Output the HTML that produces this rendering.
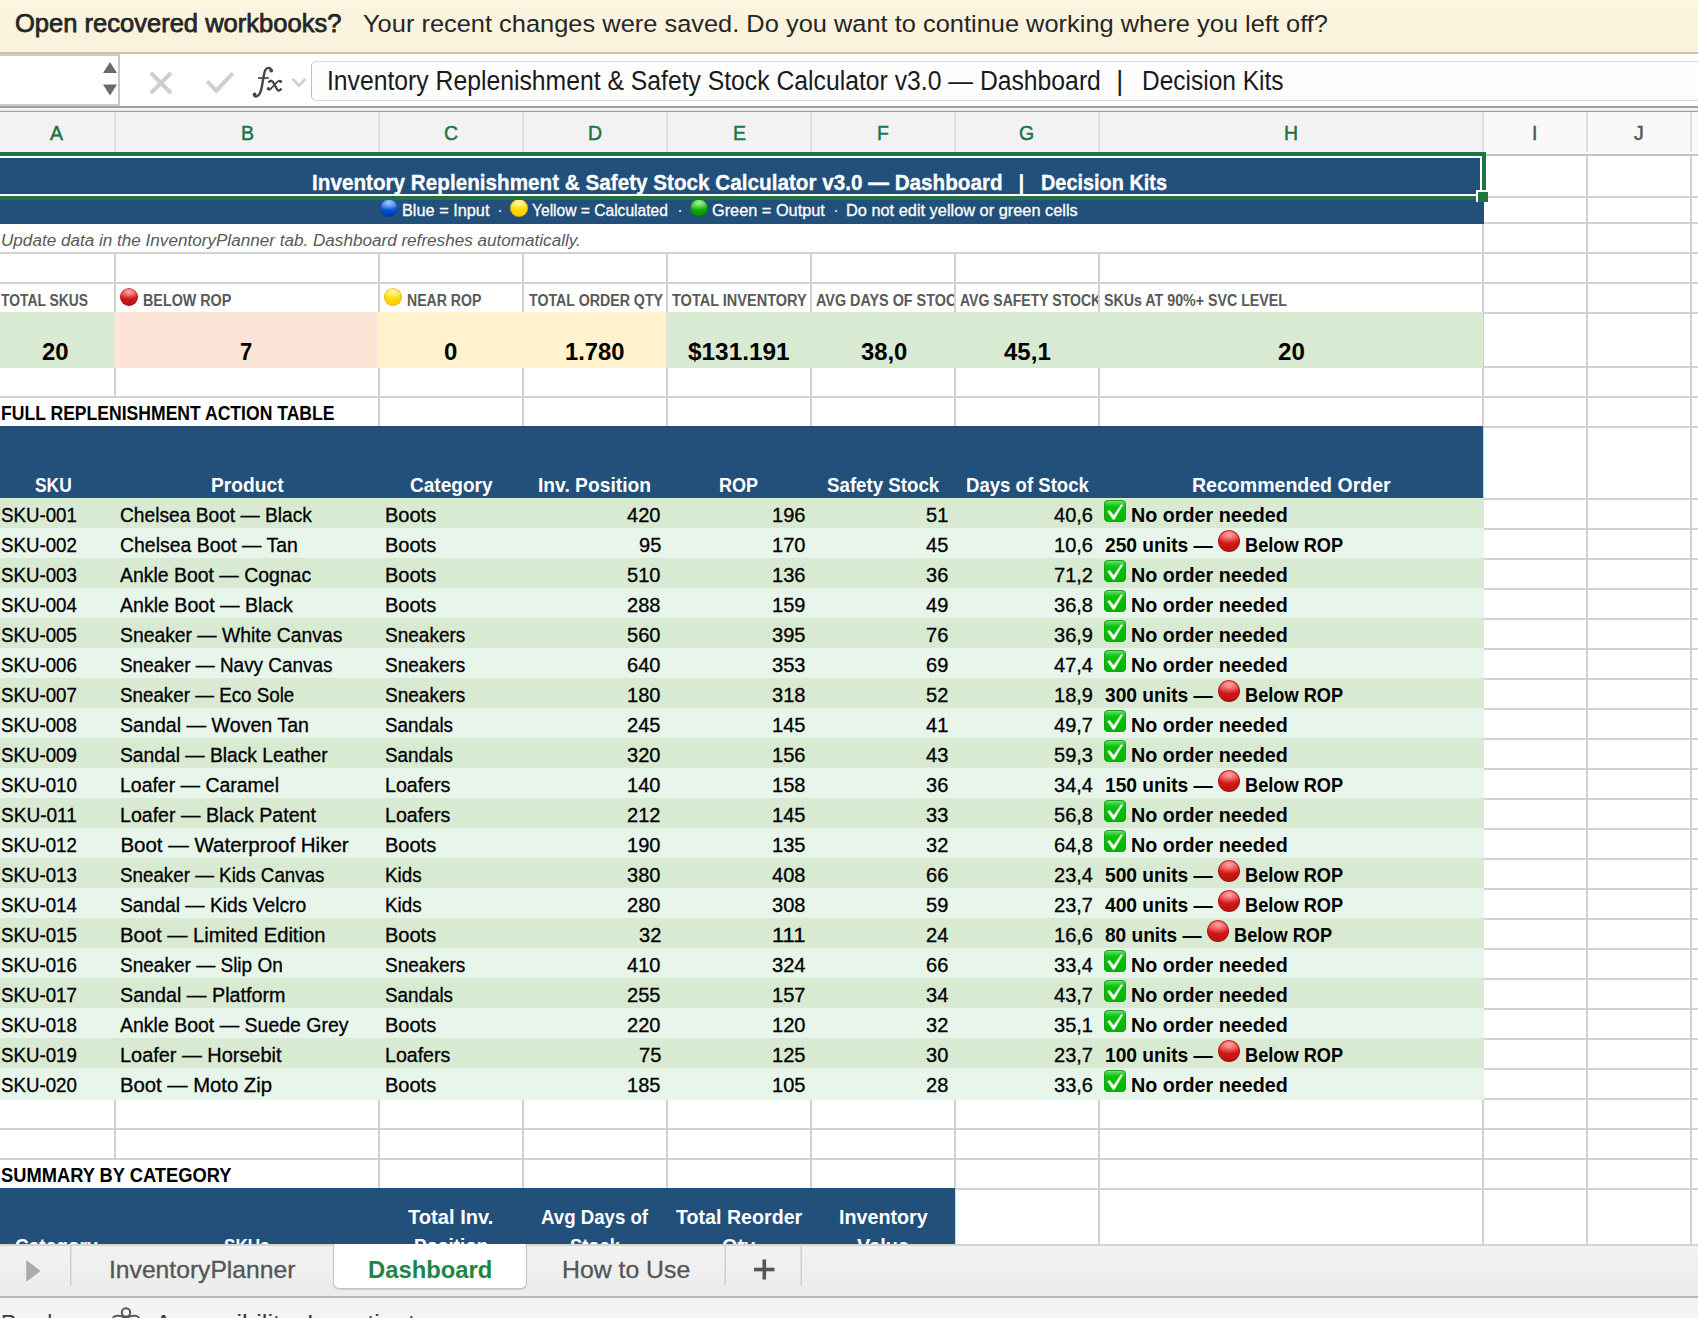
<!DOCTYPE html>
<html><head><meta charset="utf-8"><style>
html,body{margin:0;padding:0;width:1698px;height:1318px;overflow:hidden;background:#fff}
body{position:relative;font-family:"Liberation Sans",sans-serif}
body div{position:absolute;box-sizing:border-box}
.t{white-space:pre;transform-origin:0 0}
</style></head><body>
<div style="left:0px;top:112px;width:1698px;height:1132px;background:#fff;"></div>
<div style="left:0px;top:196px;width:1698px;height:2px;background:#D2D2D2;"></div>
<div style="left:0px;top:222px;width:1698px;height:2px;background:#D2D2D2;"></div>
<div style="left:0px;top:252px;width:1698px;height:2px;background:#D2D2D2;"></div>
<div style="left:0px;top:282px;width:1698px;height:2px;background:#D2D2D2;"></div>
<div style="left:0px;top:366px;width:1698px;height:2px;background:#D2D2D2;"></div>
<div style="left:0px;top:396px;width:1698px;height:2px;background:#D2D2D2;"></div>
<div style="left:0px;top:426px;width:1698px;height:2px;background:#D2D2D2;"></div>
<div style="left:0px;top:498px;width:1698px;height:2px;background:#D2D2D2;"></div>
<div style="left:0px;top:1098px;width:1698px;height:2px;background:#D2D2D2;"></div>
<div style="left:0px;top:1128px;width:1698px;height:2px;background:#D2D2D2;"></div>
<div style="left:0px;top:1158px;width:1698px;height:2px;background:#D2D2D2;"></div>
<div style="left:0px;top:1188px;width:1698px;height:2px;background:#D2D2D2;"></div>
<div style="left:1483px;top:528px;width:215px;height:2px;background:#D2D2D2;"></div>
<div style="left:1483px;top:558px;width:215px;height:2px;background:#D2D2D2;"></div>
<div style="left:1483px;top:588px;width:215px;height:2px;background:#D2D2D2;"></div>
<div style="left:1483px;top:618px;width:215px;height:2px;background:#D2D2D2;"></div>
<div style="left:1483px;top:648px;width:215px;height:2px;background:#D2D2D2;"></div>
<div style="left:1483px;top:678px;width:215px;height:2px;background:#D2D2D2;"></div>
<div style="left:1483px;top:708px;width:215px;height:2px;background:#D2D2D2;"></div>
<div style="left:1483px;top:738px;width:215px;height:2px;background:#D2D2D2;"></div>
<div style="left:1483px;top:768px;width:215px;height:2px;background:#D2D2D2;"></div>
<div style="left:1483px;top:798px;width:215px;height:2px;background:#D2D2D2;"></div>
<div style="left:1483px;top:828px;width:215px;height:2px;background:#D2D2D2;"></div>
<div style="left:1483px;top:858px;width:215px;height:2px;background:#D2D2D2;"></div>
<div style="left:1483px;top:888px;width:215px;height:2px;background:#D2D2D2;"></div>
<div style="left:1483px;top:918px;width:215px;height:2px;background:#D2D2D2;"></div>
<div style="left:1483px;top:948px;width:215px;height:2px;background:#D2D2D2;"></div>
<div style="left:1483px;top:978px;width:215px;height:2px;background:#D2D2D2;"></div>
<div style="left:1483px;top:1008px;width:215px;height:2px;background:#D2D2D2;"></div>
<div style="left:1483px;top:1038px;width:215px;height:2px;background:#D2D2D2;"></div>
<div style="left:1483px;top:1068px;width:215px;height:2px;background:#D2D2D2;"></div>
<div style="left:114px;top:154px;width:2px;height:1090px;background:#D2D2D2;"></div>
<div style="left:378px;top:154px;width:2px;height:1090px;background:#D2D2D2;"></div>
<div style="left:522px;top:154px;width:2px;height:1090px;background:#D2D2D2;"></div>
<div style="left:666px;top:154px;width:2px;height:1090px;background:#D2D2D2;"></div>
<div style="left:810px;top:154px;width:2px;height:1090px;background:#D2D2D2;"></div>
<div style="left:954px;top:154px;width:2px;height:1090px;background:#D2D2D2;"></div>
<div style="left:1098px;top:154px;width:2px;height:1090px;background:#D2D2D2;"></div>
<div style="left:1482px;top:154px;width:2px;height:1090px;background:#D2D2D2;"></div>
<div style="left:1586px;top:154px;width:2px;height:1090px;background:#D2D2D2;"></div>
<div style="left:1690px;top:154px;width:2px;height:1090px;background:#D2D2D2;"></div>
<div style="left:1483px;top:312px;width:215px;height:2px;background:#D2D2D2;"></div>
<div style="left:0px;top:154px;width:1484px;height:70px;background:#22507A;"></div>
<div style="left:0px;top:224px;width:1482px;height:28px;background:#fff;"></div>
<div style="left:0px;top:312px;width:114px;height:56px;background:#D9EAD3;"></div>
<div style="left:114px;top:312px;width:264px;height:56px;background:#FCE4D6;"></div>
<div style="left:378px;top:312px;width:288px;height:56px;background:#FFF2CC;"></div>
<div style="left:666px;top:312px;width:817px;height:56px;background:#D9EAD3;"></div>
<div style="left:114px;top:398px;width:2px;height:28px;background:#fff;"></div>
<div style="left:114px;top:1160px;width:2px;height:28px;background:#fff;"></div>
<div style="left:0px;top:426px;width:1483px;height:72px;background:#22507A;"></div>
<div style="left:0px;top:498px;width:1484px;height:30px;background:#D9EAD3;"></div>
<div style="left:0px;top:528px;width:1484px;height:30px;background:#E8F5EB;"></div>
<div style="left:0px;top:558px;width:1484px;height:30px;background:#D9EAD3;"></div>
<div style="left:0px;top:588px;width:1484px;height:30px;background:#E8F5EB;"></div>
<div style="left:0px;top:618px;width:1484px;height:30px;background:#D9EAD3;"></div>
<div style="left:0px;top:648px;width:1484px;height:30px;background:#E8F5EB;"></div>
<div style="left:0px;top:678px;width:1484px;height:30px;background:#D9EAD3;"></div>
<div style="left:0px;top:708px;width:1484px;height:30px;background:#E8F5EB;"></div>
<div style="left:0px;top:738px;width:1484px;height:30px;background:#D9EAD3;"></div>
<div style="left:0px;top:768px;width:1484px;height:30px;background:#E8F5EB;"></div>
<div style="left:0px;top:798px;width:1484px;height:30px;background:#D9EAD3;"></div>
<div style="left:0px;top:828px;width:1484px;height:30px;background:#E8F5EB;"></div>
<div style="left:0px;top:858px;width:1484px;height:30px;background:#D9EAD3;"></div>
<div style="left:0px;top:888px;width:1484px;height:30px;background:#E8F5EB;"></div>
<div style="left:0px;top:918px;width:1484px;height:30px;background:#D9EAD3;"></div>
<div style="left:0px;top:948px;width:1484px;height:30px;background:#E8F5EB;"></div>
<div style="left:0px;top:978px;width:1484px;height:30px;background:#D9EAD3;"></div>
<div style="left:0px;top:1008px;width:1484px;height:30px;background:#E8F5EB;"></div>
<div style="left:0px;top:1038px;width:1484px;height:30px;background:#D9EAD3;"></div>
<div style="left:0px;top:1068px;width:1484px;height:32px;background:#E8F5EB;"></div>
<div style="left:0px;top:1188px;width:955px;height:56px;background:#22507A;"></div>
<div class="t" style="left:0.5px;top:501px;font-size:20.5px;line-height:27px;color:#000;transform:scaleX(0.9117);-webkit-text-stroke:0.3px #000;">SKU-001</div>
<div class="t" style="left:120.4px;top:501px;font-size:20.5px;line-height:27px;color:#000;transform:scaleX(0.9359);-webkit-text-stroke:0.3px #000;">Chelsea Boot — Black</div>
<div class="t" style="left:384.6px;top:501px;font-size:20.5px;line-height:27px;color:#000;transform:scaleX(0.9756);-webkit-text-stroke:0.3px #000;">Boots</div>
<div class="t" style="left:627.37px;top:501px;font-size:20.5px;line-height:27px;color:#000;transform:scaleX(0.9780);-webkit-text-stroke:0.3px #000;">420</div>
<div class="t" style="left:771.77px;top:501px;font-size:20.5px;line-height:27px;color:#000;transform:scaleX(0.9780);-webkit-text-stroke:0.3px #000;">196</div>
<div class="t" style="left:926.1px;top:501px;font-size:20.5px;line-height:27px;color:#000;transform:scaleX(0.9780);-webkit-text-stroke:0.3px #000;">51</div>
<div class="t" style="left:1053.64px;top:501px;font-size:20.5px;line-height:27px;color:#000;transform:scaleX(0.9759);-webkit-text-stroke:0.3px #000;">40,6</div>
<div style="left:1104px;top:500px;width:22px;height:22px;border-radius:4.5px;background:linear-gradient(#8DE890 0%,#3FD447 14%,#0DC20D 30%,#00B400 100%);box-shadow:inset 0 0 0 1px #1E9E1E;"><svg width="22" height="22" viewBox="0 0 22 22" style="position:absolute;left:0;top:0"><path d="M3.6 11.5 L5.7 10.3 L9.6 15.4 L17.2 4.6 L18.7 5.1 L10.3 19.6 L9.0 19.6 Z" fill="#fff" stroke="#fff" stroke-width="0.4" stroke-linejoin="round"/></svg></div>
<div class="t" style="left:1130.5px;top:501px;font-size:20.5px;line-height:27px;color:#000;font-weight:bold;transform:scaleX(0.9619);">No order needed</div>
<div class="t" style="left:0.5px;top:531px;font-size:20.5px;line-height:27px;color:#000;transform:scaleX(0.9117);-webkit-text-stroke:0.3px #000;">SKU-002</div>
<div class="t" style="left:120.4px;top:531px;font-size:20.5px;line-height:27px;color:#000;transform:scaleX(0.9481);-webkit-text-stroke:0.3px #000;">Chelsea Boot — Tan</div>
<div class="t" style="left:384.6px;top:531px;font-size:20.5px;line-height:27px;color:#000;transform:scaleX(0.9756);-webkit-text-stroke:0.3px #000;">Boots</div>
<div class="t" style="left:638.5px;top:531px;font-size:20.5px;line-height:27px;color:#000;transform:scaleX(0.9780);-webkit-text-stroke:0.3px #000;">95</div>
<div class="t" style="left:771.77px;top:531px;font-size:20.5px;line-height:27px;color:#000;transform:scaleX(0.9780);-webkit-text-stroke:0.3px #000;">170</div>
<div class="t" style="left:926.1px;top:531px;font-size:20.5px;line-height:27px;color:#000;transform:scaleX(0.9780);-webkit-text-stroke:0.3px #000;">45</div>
<div class="t" style="left:1053.64px;top:531px;font-size:20.5px;line-height:27px;color:#000;transform:scaleX(0.9759);-webkit-text-stroke:0.3px #000;">10,6</div>
<div class="t" style="left:1104.6px;top:531px;font-size:20.5px;line-height:27px;color:#000;font-weight:bold;transform:scaleX(0.9361);">250 units —</div>
<div style="left:1218.1px;top:530px;width:22px;height:22px;border-radius:50%;background:radial-gradient(ellipse 62% 40% at 50% 22%, rgba(255,175,175,0.95) 0%, rgba(255,255,255,0) 100%),linear-gradient(#EE3A3A 0%, #D81818 50%, #B51212 100%);box-shadow:inset 0 0 0 1px rgba(160,15,15,0.75)"></div>
<div class="t" style="left:1244.8px;top:531px;font-size:20.5px;line-height:27px;color:#000;font-weight:bold;transform:scaleX(0.8878);">Below ROP</div>
<div class="t" style="left:0.5px;top:561px;font-size:20.5px;line-height:27px;color:#000;transform:scaleX(0.9117);-webkit-text-stroke:0.3px #000;">SKU-003</div>
<div class="t" style="left:120.4px;top:561px;font-size:20.5px;line-height:27px;color:#000;transform:scaleX(0.9474);-webkit-text-stroke:0.3px #000;">Ankle Boot — Cognac</div>
<div class="t" style="left:384.6px;top:561px;font-size:20.5px;line-height:27px;color:#000;transform:scaleX(0.9756);-webkit-text-stroke:0.3px #000;">Boots</div>
<div class="t" style="left:627.37px;top:561px;font-size:20.5px;line-height:27px;color:#000;transform:scaleX(0.9780);-webkit-text-stroke:0.3px #000;">510</div>
<div class="t" style="left:771.77px;top:561px;font-size:20.5px;line-height:27px;color:#000;transform:scaleX(0.9780);-webkit-text-stroke:0.3px #000;">136</div>
<div class="t" style="left:926.1px;top:561px;font-size:20.5px;line-height:27px;color:#000;transform:scaleX(0.9780);-webkit-text-stroke:0.3px #000;">36</div>
<div class="t" style="left:1053.64px;top:561px;font-size:20.5px;line-height:27px;color:#000;transform:scaleX(0.9759);-webkit-text-stroke:0.3px #000;">71,2</div>
<div style="left:1104px;top:560px;width:22px;height:22px;border-radius:4.5px;background:linear-gradient(#8DE890 0%,#3FD447 14%,#0DC20D 30%,#00B400 100%);box-shadow:inset 0 0 0 1px #1E9E1E;"><svg width="22" height="22" viewBox="0 0 22 22" style="position:absolute;left:0;top:0"><path d="M3.6 11.5 L5.7 10.3 L9.6 15.4 L17.2 4.6 L18.7 5.1 L10.3 19.6 L9.0 19.6 Z" fill="#fff" stroke="#fff" stroke-width="0.4" stroke-linejoin="round"/></svg></div>
<div class="t" style="left:1130.5px;top:561px;font-size:20.5px;line-height:27px;color:#000;font-weight:bold;transform:scaleX(0.9619);">No order needed</div>
<div class="t" style="left:0.5px;top:591px;font-size:20.5px;line-height:27px;color:#000;transform:scaleX(0.9117);-webkit-text-stroke:0.3px #000;">SKU-004</div>
<div class="t" style="left:120.4px;top:591px;font-size:20.5px;line-height:27px;color:#000;transform:scaleX(0.9541);-webkit-text-stroke:0.3px #000;">Ankle Boot — Black</div>
<div class="t" style="left:384.6px;top:591px;font-size:20.5px;line-height:27px;color:#000;transform:scaleX(0.9756);-webkit-text-stroke:0.3px #000;">Boots</div>
<div class="t" style="left:627.37px;top:591px;font-size:20.5px;line-height:27px;color:#000;transform:scaleX(0.9780);-webkit-text-stroke:0.3px #000;">288</div>
<div class="t" style="left:771.77px;top:591px;font-size:20.5px;line-height:27px;color:#000;transform:scaleX(0.9780);-webkit-text-stroke:0.3px #000;">159</div>
<div class="t" style="left:926.1px;top:591px;font-size:20.5px;line-height:27px;color:#000;transform:scaleX(0.9780);-webkit-text-stroke:0.3px #000;">49</div>
<div class="t" style="left:1053.64px;top:591px;font-size:20.5px;line-height:27px;color:#000;transform:scaleX(0.9759);-webkit-text-stroke:0.3px #000;">36,8</div>
<div style="left:1104px;top:590px;width:22px;height:22px;border-radius:4.5px;background:linear-gradient(#8DE890 0%,#3FD447 14%,#0DC20D 30%,#00B400 100%);box-shadow:inset 0 0 0 1px #1E9E1E;"><svg width="22" height="22" viewBox="0 0 22 22" style="position:absolute;left:0;top:0"><path d="M3.6 11.5 L5.7 10.3 L9.6 15.4 L17.2 4.6 L18.7 5.1 L10.3 19.6 L9.0 19.6 Z" fill="#fff" stroke="#fff" stroke-width="0.4" stroke-linejoin="round"/></svg></div>
<div class="t" style="left:1130.5px;top:591px;font-size:20.5px;line-height:27px;color:#000;font-weight:bold;transform:scaleX(0.9619);">No order needed</div>
<div class="t" style="left:0.5px;top:621px;font-size:20.5px;line-height:27px;color:#000;transform:scaleX(0.9117);-webkit-text-stroke:0.3px #000;">SKU-005</div>
<div class="t" style="left:120.4px;top:621px;font-size:20.5px;line-height:27px;color:#000;transform:scaleX(0.9427);-webkit-text-stroke:0.3px #000;">Sneaker — White Canvas</div>
<div class="t" style="left:384.6px;top:621px;font-size:20.5px;line-height:27px;color:#000;transform:scaleX(0.9280);-webkit-text-stroke:0.3px #000;">Sneakers</div>
<div class="t" style="left:627.37px;top:621px;font-size:20.5px;line-height:27px;color:#000;transform:scaleX(0.9780);-webkit-text-stroke:0.3px #000;">560</div>
<div class="t" style="left:771.77px;top:621px;font-size:20.5px;line-height:27px;color:#000;transform:scaleX(0.9780);-webkit-text-stroke:0.3px #000;">395</div>
<div class="t" style="left:926.1px;top:621px;font-size:20.5px;line-height:27px;color:#000;transform:scaleX(0.9780);-webkit-text-stroke:0.3px #000;">76</div>
<div class="t" style="left:1053.64px;top:621px;font-size:20.5px;line-height:27px;color:#000;transform:scaleX(0.9759);-webkit-text-stroke:0.3px #000;">36,9</div>
<div style="left:1104px;top:620px;width:22px;height:22px;border-radius:4.5px;background:linear-gradient(#8DE890 0%,#3FD447 14%,#0DC20D 30%,#00B400 100%);box-shadow:inset 0 0 0 1px #1E9E1E;"><svg width="22" height="22" viewBox="0 0 22 22" style="position:absolute;left:0;top:0"><path d="M3.6 11.5 L5.7 10.3 L9.6 15.4 L17.2 4.6 L18.7 5.1 L10.3 19.6 L9.0 19.6 Z" fill="#fff" stroke="#fff" stroke-width="0.4" stroke-linejoin="round"/></svg></div>
<div class="t" style="left:1130.5px;top:621px;font-size:20.5px;line-height:27px;color:#000;font-weight:bold;transform:scaleX(0.9619);">No order needed</div>
<div class="t" style="left:0.5px;top:651px;font-size:20.5px;line-height:27px;color:#000;transform:scaleX(0.9117);-webkit-text-stroke:0.3px #000;">SKU-006</div>
<div class="t" style="left:120.4px;top:651px;font-size:20.5px;line-height:27px;color:#000;transform:scaleX(0.9232);-webkit-text-stroke:0.3px #000;">Sneaker — Navy Canvas</div>
<div class="t" style="left:384.6px;top:651px;font-size:20.5px;line-height:27px;color:#000;transform:scaleX(0.9280);-webkit-text-stroke:0.3px #000;">Sneakers</div>
<div class="t" style="left:627.37px;top:651px;font-size:20.5px;line-height:27px;color:#000;transform:scaleX(0.9780);-webkit-text-stroke:0.3px #000;">640</div>
<div class="t" style="left:771.77px;top:651px;font-size:20.5px;line-height:27px;color:#000;transform:scaleX(0.9780);-webkit-text-stroke:0.3px #000;">353</div>
<div class="t" style="left:926.1px;top:651px;font-size:20.5px;line-height:27px;color:#000;transform:scaleX(0.9780);-webkit-text-stroke:0.3px #000;">69</div>
<div class="t" style="left:1053.64px;top:651px;font-size:20.5px;line-height:27px;color:#000;transform:scaleX(0.9759);-webkit-text-stroke:0.3px #000;">47,4</div>
<div style="left:1104px;top:650px;width:22px;height:22px;border-radius:4.5px;background:linear-gradient(#8DE890 0%,#3FD447 14%,#0DC20D 30%,#00B400 100%);box-shadow:inset 0 0 0 1px #1E9E1E;"><svg width="22" height="22" viewBox="0 0 22 22" style="position:absolute;left:0;top:0"><path d="M3.6 11.5 L5.7 10.3 L9.6 15.4 L17.2 4.6 L18.7 5.1 L10.3 19.6 L9.0 19.6 Z" fill="#fff" stroke="#fff" stroke-width="0.4" stroke-linejoin="round"/></svg></div>
<div class="t" style="left:1130.5px;top:651px;font-size:20.5px;line-height:27px;color:#000;font-weight:bold;transform:scaleX(0.9619);">No order needed</div>
<div class="t" style="left:0.5px;top:681px;font-size:20.5px;line-height:27px;color:#000;transform:scaleX(0.9117);-webkit-text-stroke:0.3px #000;">SKU-007</div>
<div class="t" style="left:120.4px;top:681px;font-size:20.5px;line-height:27px;color:#000;transform:scaleX(0.9159);-webkit-text-stroke:0.3px #000;">Sneaker — Eco Sole</div>
<div class="t" style="left:384.6px;top:681px;font-size:20.5px;line-height:27px;color:#000;transform:scaleX(0.9280);-webkit-text-stroke:0.3px #000;">Sneakers</div>
<div class="t" style="left:627.37px;top:681px;font-size:20.5px;line-height:27px;color:#000;transform:scaleX(0.9780);-webkit-text-stroke:0.3px #000;">180</div>
<div class="t" style="left:771.77px;top:681px;font-size:20.5px;line-height:27px;color:#000;transform:scaleX(0.9780);-webkit-text-stroke:0.3px #000;">318</div>
<div class="t" style="left:926.1px;top:681px;font-size:20.5px;line-height:27px;color:#000;transform:scaleX(0.9780);-webkit-text-stroke:0.3px #000;">52</div>
<div class="t" style="left:1053.64px;top:681px;font-size:20.5px;line-height:27px;color:#000;transform:scaleX(0.9759);-webkit-text-stroke:0.3px #000;">18,9</div>
<div class="t" style="left:1104.6px;top:681px;font-size:20.5px;line-height:27px;color:#000;font-weight:bold;transform:scaleX(0.9361);">300 units —</div>
<div style="left:1218.1px;top:680px;width:22px;height:22px;border-radius:50%;background:radial-gradient(ellipse 62% 40% at 50% 22%, rgba(255,175,175,0.95) 0%, rgba(255,255,255,0) 100%),linear-gradient(#EE3A3A 0%, #D81818 50%, #B51212 100%);box-shadow:inset 0 0 0 1px rgba(160,15,15,0.75)"></div>
<div class="t" style="left:1244.8px;top:681px;font-size:20.5px;line-height:27px;color:#000;font-weight:bold;transform:scaleX(0.8878);">Below ROP</div>
<div class="t" style="left:0.5px;top:711px;font-size:20.5px;line-height:27px;color:#000;transform:scaleX(0.9117);-webkit-text-stroke:0.3px #000;">SKU-008</div>
<div class="t" style="left:120.4px;top:711px;font-size:20.5px;line-height:27px;color:#000;transform:scaleX(0.9566);-webkit-text-stroke:0.3px #000;">Sandal — Woven Tan</div>
<div class="t" style="left:384.6px;top:711px;font-size:20.5px;line-height:27px;color:#000;transform:scaleX(0.9173);-webkit-text-stroke:0.3px #000;">Sandals</div>
<div class="t" style="left:627.37px;top:711px;font-size:20.5px;line-height:27px;color:#000;transform:scaleX(0.9780);-webkit-text-stroke:0.3px #000;">245</div>
<div class="t" style="left:771.77px;top:711px;font-size:20.5px;line-height:27px;color:#000;transform:scaleX(0.9780);-webkit-text-stroke:0.3px #000;">145</div>
<div class="t" style="left:926.1px;top:711px;font-size:20.5px;line-height:27px;color:#000;transform:scaleX(0.9780);-webkit-text-stroke:0.3px #000;">41</div>
<div class="t" style="left:1053.64px;top:711px;font-size:20.5px;line-height:27px;color:#000;transform:scaleX(0.9759);-webkit-text-stroke:0.3px #000;">49,7</div>
<div style="left:1104px;top:710px;width:22px;height:22px;border-radius:4.5px;background:linear-gradient(#8DE890 0%,#3FD447 14%,#0DC20D 30%,#00B400 100%);box-shadow:inset 0 0 0 1px #1E9E1E;"><svg width="22" height="22" viewBox="0 0 22 22" style="position:absolute;left:0;top:0"><path d="M3.6 11.5 L5.7 10.3 L9.6 15.4 L17.2 4.6 L18.7 5.1 L10.3 19.6 L9.0 19.6 Z" fill="#fff" stroke="#fff" stroke-width="0.4" stroke-linejoin="round"/></svg></div>
<div class="t" style="left:1130.5px;top:711px;font-size:20.5px;line-height:27px;color:#000;font-weight:bold;transform:scaleX(0.9619);">No order needed</div>
<div class="t" style="left:0.5px;top:741px;font-size:20.5px;line-height:27px;color:#000;transform:scaleX(0.9117);-webkit-text-stroke:0.3px #000;">SKU-009</div>
<div class="t" style="left:120.4px;top:741px;font-size:20.5px;line-height:27px;color:#000;transform:scaleX(0.9393);-webkit-text-stroke:0.3px #000;">Sandal — Black Leather</div>
<div class="t" style="left:384.6px;top:741px;font-size:20.5px;line-height:27px;color:#000;transform:scaleX(0.9173);-webkit-text-stroke:0.3px #000;">Sandals</div>
<div class="t" style="left:627.37px;top:741px;font-size:20.5px;line-height:27px;color:#000;transform:scaleX(0.9780);-webkit-text-stroke:0.3px #000;">320</div>
<div class="t" style="left:771.77px;top:741px;font-size:20.5px;line-height:27px;color:#000;transform:scaleX(0.9780);-webkit-text-stroke:0.3px #000;">156</div>
<div class="t" style="left:926.1px;top:741px;font-size:20.5px;line-height:27px;color:#000;transform:scaleX(0.9780);-webkit-text-stroke:0.3px #000;">43</div>
<div class="t" style="left:1053.64px;top:741px;font-size:20.5px;line-height:27px;color:#000;transform:scaleX(0.9759);-webkit-text-stroke:0.3px #000;">59,3</div>
<div style="left:1104px;top:740px;width:22px;height:22px;border-radius:4.5px;background:linear-gradient(#8DE890 0%,#3FD447 14%,#0DC20D 30%,#00B400 100%);box-shadow:inset 0 0 0 1px #1E9E1E;"><svg width="22" height="22" viewBox="0 0 22 22" style="position:absolute;left:0;top:0"><path d="M3.6 11.5 L5.7 10.3 L9.6 15.4 L17.2 4.6 L18.7 5.1 L10.3 19.6 L9.0 19.6 Z" fill="#fff" stroke="#fff" stroke-width="0.4" stroke-linejoin="round"/></svg></div>
<div class="t" style="left:1130.5px;top:741px;font-size:20.5px;line-height:27px;color:#000;font-weight:bold;transform:scaleX(0.9619);">No order needed</div>
<div class="t" style="left:0.5px;top:771px;font-size:20.5px;line-height:27px;color:#000;transform:scaleX(0.9117);-webkit-text-stroke:0.3px #000;">SKU-010</div>
<div class="t" style="left:120.4px;top:771px;font-size:20.5px;line-height:27px;color:#000;transform:scaleX(0.9492);-webkit-text-stroke:0.3px #000;">Loafer — Caramel</div>
<div class="t" style="left:384.6px;top:771px;font-size:20.5px;line-height:27px;color:#000;transform:scaleX(0.9553);-webkit-text-stroke:0.3px #000;">Loafers</div>
<div class="t" style="left:627.37px;top:771px;font-size:20.5px;line-height:27px;color:#000;transform:scaleX(0.9780);-webkit-text-stroke:0.3px #000;">140</div>
<div class="t" style="left:771.77px;top:771px;font-size:20.5px;line-height:27px;color:#000;transform:scaleX(0.9780);-webkit-text-stroke:0.3px #000;">158</div>
<div class="t" style="left:926.1px;top:771px;font-size:20.5px;line-height:27px;color:#000;transform:scaleX(0.9780);-webkit-text-stroke:0.3px #000;">36</div>
<div class="t" style="left:1053.64px;top:771px;font-size:20.5px;line-height:27px;color:#000;transform:scaleX(0.9759);-webkit-text-stroke:0.3px #000;">34,4</div>
<div class="t" style="left:1104.6px;top:771px;font-size:20.5px;line-height:27px;color:#000;font-weight:bold;transform:scaleX(0.9361);">150 units —</div>
<div style="left:1218.1px;top:770px;width:22px;height:22px;border-radius:50%;background:radial-gradient(ellipse 62% 40% at 50% 22%, rgba(255,175,175,0.95) 0%, rgba(255,255,255,0) 100%),linear-gradient(#EE3A3A 0%, #D81818 50%, #B51212 100%);box-shadow:inset 0 0 0 1px rgba(160,15,15,0.75)"></div>
<div class="t" style="left:1244.8px;top:771px;font-size:20.5px;line-height:27px;color:#000;font-weight:bold;transform:scaleX(0.8878);">Below ROP</div>
<div class="t" style="left:0.5px;top:801px;font-size:20.5px;line-height:27px;color:#000;transform:scaleX(0.9287);-webkit-text-stroke:0.3px #000;">SKU-011</div>
<div class="t" style="left:120.4px;top:801px;font-size:20.5px;line-height:27px;color:#000;transform:scaleX(0.9551);-webkit-text-stroke:0.3px #000;">Loafer — Black Patent</div>
<div class="t" style="left:384.6px;top:801px;font-size:20.5px;line-height:27px;color:#000;transform:scaleX(0.9553);-webkit-text-stroke:0.3px #000;">Loafers</div>
<div class="t" style="left:627.37px;top:801px;font-size:20.5px;line-height:27px;color:#000;transform:scaleX(0.9780);-webkit-text-stroke:0.3px #000;">212</div>
<div class="t" style="left:771.77px;top:801px;font-size:20.5px;line-height:27px;color:#000;transform:scaleX(0.9780);-webkit-text-stroke:0.3px #000;">145</div>
<div class="t" style="left:926.1px;top:801px;font-size:20.5px;line-height:27px;color:#000;transform:scaleX(0.9780);-webkit-text-stroke:0.3px #000;">33</div>
<div class="t" style="left:1053.64px;top:801px;font-size:20.5px;line-height:27px;color:#000;transform:scaleX(0.9759);-webkit-text-stroke:0.3px #000;">56,8</div>
<div style="left:1104px;top:800px;width:22px;height:22px;border-radius:4.5px;background:linear-gradient(#8DE890 0%,#3FD447 14%,#0DC20D 30%,#00B400 100%);box-shadow:inset 0 0 0 1px #1E9E1E;"><svg width="22" height="22" viewBox="0 0 22 22" style="position:absolute;left:0;top:0"><path d="M3.6 11.5 L5.7 10.3 L9.6 15.4 L17.2 4.6 L18.7 5.1 L10.3 19.6 L9.0 19.6 Z" fill="#fff" stroke="#fff" stroke-width="0.4" stroke-linejoin="round"/></svg></div>
<div class="t" style="left:1130.5px;top:801px;font-size:20.5px;line-height:27px;color:#000;font-weight:bold;transform:scaleX(0.9619);">No order needed</div>
<div class="t" style="left:0.5px;top:831px;font-size:20.5px;line-height:27px;color:#000;transform:scaleX(0.9117);-webkit-text-stroke:0.3px #000;">SKU-012</div>
<div class="t" style="left:120.4px;top:831px;font-size:20.5px;line-height:27px;color:#000;-webkit-text-stroke:0.3px #000;">Boot — Waterproof Hiker</div>
<div class="t" style="left:384.6px;top:831px;font-size:20.5px;line-height:27px;color:#000;transform:scaleX(0.9756);-webkit-text-stroke:0.3px #000;">Boots</div>
<div class="t" style="left:627.37px;top:831px;font-size:20.5px;line-height:27px;color:#000;transform:scaleX(0.9780);-webkit-text-stroke:0.3px #000;">190</div>
<div class="t" style="left:771.77px;top:831px;font-size:20.5px;line-height:27px;color:#000;transform:scaleX(0.9780);-webkit-text-stroke:0.3px #000;">135</div>
<div class="t" style="left:926.1px;top:831px;font-size:20.5px;line-height:27px;color:#000;transform:scaleX(0.9780);-webkit-text-stroke:0.3px #000;">32</div>
<div class="t" style="left:1053.64px;top:831px;font-size:20.5px;line-height:27px;color:#000;transform:scaleX(0.9759);-webkit-text-stroke:0.3px #000;">64,8</div>
<div style="left:1104px;top:830px;width:22px;height:22px;border-radius:4.5px;background:linear-gradient(#8DE890 0%,#3FD447 14%,#0DC20D 30%,#00B400 100%);box-shadow:inset 0 0 0 1px #1E9E1E;"><svg width="22" height="22" viewBox="0 0 22 22" style="position:absolute;left:0;top:0"><path d="M3.6 11.5 L5.7 10.3 L9.6 15.4 L17.2 4.6 L18.7 5.1 L10.3 19.6 L9.0 19.6 Z" fill="#fff" stroke="#fff" stroke-width="0.4" stroke-linejoin="round"/></svg></div>
<div class="t" style="left:1130.5px;top:831px;font-size:20.5px;line-height:27px;color:#000;font-weight:bold;transform:scaleX(0.9619);">No order needed</div>
<div class="t" style="left:0.5px;top:861px;font-size:20.5px;line-height:27px;color:#000;transform:scaleX(0.9117);-webkit-text-stroke:0.3px #000;">SKU-013</div>
<div class="t" style="left:120.4px;top:861px;font-size:20.5px;line-height:27px;color:#000;transform:scaleX(0.9157);-webkit-text-stroke:0.3px #000;">Sneaker — Kids Canvas</div>
<div class="t" style="left:384.6px;top:861px;font-size:20.5px;line-height:27px;color:#000;transform:scaleX(0.9188);-webkit-text-stroke:0.3px #000;">Kids</div>
<div class="t" style="left:627.37px;top:861px;font-size:20.5px;line-height:27px;color:#000;transform:scaleX(0.9780);-webkit-text-stroke:0.3px #000;">380</div>
<div class="t" style="left:771.77px;top:861px;font-size:20.5px;line-height:27px;color:#000;transform:scaleX(0.9780);-webkit-text-stroke:0.3px #000;">408</div>
<div class="t" style="left:926.1px;top:861px;font-size:20.5px;line-height:27px;color:#000;transform:scaleX(0.9780);-webkit-text-stroke:0.3px #000;">66</div>
<div class="t" style="left:1053.64px;top:861px;font-size:20.5px;line-height:27px;color:#000;transform:scaleX(0.9759);-webkit-text-stroke:0.3px #000;">23,4</div>
<div class="t" style="left:1104.6px;top:861px;font-size:20.5px;line-height:27px;color:#000;font-weight:bold;transform:scaleX(0.9361);">500 units —</div>
<div style="left:1218.1px;top:860px;width:22px;height:22px;border-radius:50%;background:radial-gradient(ellipse 62% 40% at 50% 22%, rgba(255,175,175,0.95) 0%, rgba(255,255,255,0) 100%),linear-gradient(#EE3A3A 0%, #D81818 50%, #B51212 100%);box-shadow:inset 0 0 0 1px rgba(160,15,15,0.75)"></div>
<div class="t" style="left:1244.8px;top:861px;font-size:20.5px;line-height:27px;color:#000;font-weight:bold;transform:scaleX(0.8878);">Below ROP</div>
<div class="t" style="left:0.5px;top:891px;font-size:20.5px;line-height:27px;color:#000;transform:scaleX(0.9117);-webkit-text-stroke:0.3px #000;">SKU-014</div>
<div class="t" style="left:120.4px;top:891px;font-size:20.5px;line-height:27px;color:#000;transform:scaleX(0.9392);-webkit-text-stroke:0.3px #000;">Sandal — Kids Velcro</div>
<div class="t" style="left:384.6px;top:891px;font-size:20.5px;line-height:27px;color:#000;transform:scaleX(0.9188);-webkit-text-stroke:0.3px #000;">Kids</div>
<div class="t" style="left:627.37px;top:891px;font-size:20.5px;line-height:27px;color:#000;transform:scaleX(0.9780);-webkit-text-stroke:0.3px #000;">280</div>
<div class="t" style="left:771.77px;top:891px;font-size:20.5px;line-height:27px;color:#000;transform:scaleX(0.9780);-webkit-text-stroke:0.3px #000;">308</div>
<div class="t" style="left:926.1px;top:891px;font-size:20.5px;line-height:27px;color:#000;transform:scaleX(0.9780);-webkit-text-stroke:0.3px #000;">59</div>
<div class="t" style="left:1053.64px;top:891px;font-size:20.5px;line-height:27px;color:#000;transform:scaleX(0.9759);-webkit-text-stroke:0.3px #000;">23,7</div>
<div class="t" style="left:1104.6px;top:891px;font-size:20.5px;line-height:27px;color:#000;font-weight:bold;transform:scaleX(0.9361);">400 units —</div>
<div style="left:1218.1px;top:890px;width:22px;height:22px;border-radius:50%;background:radial-gradient(ellipse 62% 40% at 50% 22%, rgba(255,175,175,0.95) 0%, rgba(255,255,255,0) 100%),linear-gradient(#EE3A3A 0%, #D81818 50%, #B51212 100%);box-shadow:inset 0 0 0 1px rgba(160,15,15,0.75)"></div>
<div class="t" style="left:1244.8px;top:891px;font-size:20.5px;line-height:27px;color:#000;font-weight:bold;transform:scaleX(0.8878);">Below ROP</div>
<div class="t" style="left:0.5px;top:921px;font-size:20.5px;line-height:27px;color:#000;transform:scaleX(0.9117);-webkit-text-stroke:0.3px #000;">SKU-015</div>
<div class="t" style="left:120.4px;top:921px;font-size:20.5px;line-height:27px;color:#000;transform:scaleX(0.9852);-webkit-text-stroke:0.3px #000;">Boot — Limited Edition</div>
<div class="t" style="left:384.6px;top:921px;font-size:20.5px;line-height:27px;color:#000;transform:scaleX(0.9756);-webkit-text-stroke:0.3px #000;">Boots</div>
<div class="t" style="left:638.5px;top:921px;font-size:20.5px;line-height:27px;color:#000;transform:scaleX(0.9780);-webkit-text-stroke:0.3px #000;">32</div>
<div class="t" style="left:771.75px;top:921px;font-size:20.5px;line-height:27px;color:#000;transform:scaleX(1.0735);-webkit-text-stroke:0.3px #000;">111</div>
<div class="t" style="left:926.1px;top:921px;font-size:20.5px;line-height:27px;color:#000;transform:scaleX(0.9780);-webkit-text-stroke:0.3px #000;">24</div>
<div class="t" style="left:1053.64px;top:921px;font-size:20.5px;line-height:27px;color:#000;transform:scaleX(0.9759);-webkit-text-stroke:0.3px #000;">16,6</div>
<div class="t" style="left:1104.6px;top:921px;font-size:20.5px;line-height:27px;color:#000;font-weight:bold;transform:scaleX(0.9312);">80 units —</div>
<div style="left:1206.95px;top:920px;width:22px;height:22px;border-radius:50%;background:radial-gradient(ellipse 62% 40% at 50% 22%, rgba(255,175,175,0.95) 0%, rgba(255,255,255,0) 100%),linear-gradient(#EE3A3A 0%, #D81818 50%, #B51212 100%);box-shadow:inset 0 0 0 1px rgba(160,15,15,0.75)"></div>
<div class="t" style="left:1233.65px;top:921px;font-size:20.5px;line-height:27px;color:#000;font-weight:bold;transform:scaleX(0.8878);">Below ROP</div>
<div class="t" style="left:0.5px;top:951px;font-size:20.5px;line-height:27px;color:#000;transform:scaleX(0.9117);-webkit-text-stroke:0.3px #000;">SKU-016</div>
<div class="t" style="left:120.4px;top:951px;font-size:20.5px;line-height:27px;color:#000;transform:scaleX(0.9280);-webkit-text-stroke:0.3px #000;">Sneaker — Slip On</div>
<div class="t" style="left:384.6px;top:951px;font-size:20.5px;line-height:27px;color:#000;transform:scaleX(0.9280);-webkit-text-stroke:0.3px #000;">Sneakers</div>
<div class="t" style="left:627.37px;top:951px;font-size:20.5px;line-height:27px;color:#000;transform:scaleX(0.9780);-webkit-text-stroke:0.3px #000;">410</div>
<div class="t" style="left:771.77px;top:951px;font-size:20.5px;line-height:27px;color:#000;transform:scaleX(0.9780);-webkit-text-stroke:0.3px #000;">324</div>
<div class="t" style="left:926.1px;top:951px;font-size:20.5px;line-height:27px;color:#000;transform:scaleX(0.9780);-webkit-text-stroke:0.3px #000;">66</div>
<div class="t" style="left:1053.64px;top:951px;font-size:20.5px;line-height:27px;color:#000;transform:scaleX(0.9759);-webkit-text-stroke:0.3px #000;">33,4</div>
<div style="left:1104px;top:950px;width:22px;height:22px;border-radius:4.5px;background:linear-gradient(#8DE890 0%,#3FD447 14%,#0DC20D 30%,#00B400 100%);box-shadow:inset 0 0 0 1px #1E9E1E;"><svg width="22" height="22" viewBox="0 0 22 22" style="position:absolute;left:0;top:0"><path d="M3.6 11.5 L5.7 10.3 L9.6 15.4 L17.2 4.6 L18.7 5.1 L10.3 19.6 L9.0 19.6 Z" fill="#fff" stroke="#fff" stroke-width="0.4" stroke-linejoin="round"/></svg></div>
<div class="t" style="left:1130.5px;top:951px;font-size:20.5px;line-height:27px;color:#000;font-weight:bold;transform:scaleX(0.9619);">No order needed</div>
<div class="t" style="left:0.5px;top:981px;font-size:20.5px;line-height:27px;color:#000;transform:scaleX(0.9117);-webkit-text-stroke:0.3px #000;">SKU-017</div>
<div class="t" style="left:120.4px;top:981px;font-size:20.5px;line-height:27px;color:#000;transform:scaleX(0.9616);-webkit-text-stroke:0.3px #000;">Sandal — Platform</div>
<div class="t" style="left:384.6px;top:981px;font-size:20.5px;line-height:27px;color:#000;transform:scaleX(0.9173);-webkit-text-stroke:0.3px #000;">Sandals</div>
<div class="t" style="left:627.37px;top:981px;font-size:20.5px;line-height:27px;color:#000;transform:scaleX(0.9780);-webkit-text-stroke:0.3px #000;">255</div>
<div class="t" style="left:771.77px;top:981px;font-size:20.5px;line-height:27px;color:#000;transform:scaleX(0.9780);-webkit-text-stroke:0.3px #000;">157</div>
<div class="t" style="left:926.1px;top:981px;font-size:20.5px;line-height:27px;color:#000;transform:scaleX(0.9780);-webkit-text-stroke:0.3px #000;">34</div>
<div class="t" style="left:1053.64px;top:981px;font-size:20.5px;line-height:27px;color:#000;transform:scaleX(0.9759);-webkit-text-stroke:0.3px #000;">43,7</div>
<div style="left:1104px;top:980px;width:22px;height:22px;border-radius:4.5px;background:linear-gradient(#8DE890 0%,#3FD447 14%,#0DC20D 30%,#00B400 100%);box-shadow:inset 0 0 0 1px #1E9E1E;"><svg width="22" height="22" viewBox="0 0 22 22" style="position:absolute;left:0;top:0"><path d="M3.6 11.5 L5.7 10.3 L9.6 15.4 L17.2 4.6 L18.7 5.1 L10.3 19.6 L9.0 19.6 Z" fill="#fff" stroke="#fff" stroke-width="0.4" stroke-linejoin="round"/></svg></div>
<div class="t" style="left:1130.5px;top:981px;font-size:20.5px;line-height:27px;color:#000;font-weight:bold;transform:scaleX(0.9619);">No order needed</div>
<div class="t" style="left:0.5px;top:1011px;font-size:20.5px;line-height:27px;color:#000;transform:scaleX(0.9117);-webkit-text-stroke:0.3px #000;">SKU-018</div>
<div class="t" style="left:120.4px;top:1011px;font-size:20.5px;line-height:27px;color:#000;transform:scaleX(0.9505);-webkit-text-stroke:0.3px #000;">Ankle Boot — Suede Grey</div>
<div class="t" style="left:384.6px;top:1011px;font-size:20.5px;line-height:27px;color:#000;transform:scaleX(0.9756);-webkit-text-stroke:0.3px #000;">Boots</div>
<div class="t" style="left:627.37px;top:1011px;font-size:20.5px;line-height:27px;color:#000;transform:scaleX(0.9780);-webkit-text-stroke:0.3px #000;">220</div>
<div class="t" style="left:771.77px;top:1011px;font-size:20.5px;line-height:27px;color:#000;transform:scaleX(0.9780);-webkit-text-stroke:0.3px #000;">120</div>
<div class="t" style="left:926.1px;top:1011px;font-size:20.5px;line-height:27px;color:#000;transform:scaleX(0.9780);-webkit-text-stroke:0.3px #000;">32</div>
<div class="t" style="left:1053.64px;top:1011px;font-size:20.5px;line-height:27px;color:#000;transform:scaleX(0.9759);-webkit-text-stroke:0.3px #000;">35,1</div>
<div style="left:1104px;top:1010px;width:22px;height:22px;border-radius:4.5px;background:linear-gradient(#8DE890 0%,#3FD447 14%,#0DC20D 30%,#00B400 100%);box-shadow:inset 0 0 0 1px #1E9E1E;"><svg width="22" height="22" viewBox="0 0 22 22" style="position:absolute;left:0;top:0"><path d="M3.6 11.5 L5.7 10.3 L9.6 15.4 L17.2 4.6 L18.7 5.1 L10.3 19.6 L9.0 19.6 Z" fill="#fff" stroke="#fff" stroke-width="0.4" stroke-linejoin="round"/></svg></div>
<div class="t" style="left:1130.5px;top:1011px;font-size:20.5px;line-height:27px;color:#000;font-weight:bold;transform:scaleX(0.9619);">No order needed</div>
<div class="t" style="left:0.5px;top:1041px;font-size:20.5px;line-height:27px;color:#000;transform:scaleX(0.9117);-webkit-text-stroke:0.3px #000;">SKU-019</div>
<div class="t" style="left:120.4px;top:1041px;font-size:20.5px;line-height:27px;color:#000;transform:scaleX(0.9704);-webkit-text-stroke:0.3px #000;">Loafer — Horsebit</div>
<div class="t" style="left:384.6px;top:1041px;font-size:20.5px;line-height:27px;color:#000;transform:scaleX(0.9553);-webkit-text-stroke:0.3px #000;">Loafers</div>
<div class="t" style="left:638.5px;top:1041px;font-size:20.5px;line-height:27px;color:#000;transform:scaleX(0.9780);-webkit-text-stroke:0.3px #000;">75</div>
<div class="t" style="left:771.77px;top:1041px;font-size:20.5px;line-height:27px;color:#000;transform:scaleX(0.9780);-webkit-text-stroke:0.3px #000;">125</div>
<div class="t" style="left:926.1px;top:1041px;font-size:20.5px;line-height:27px;color:#000;transform:scaleX(0.9780);-webkit-text-stroke:0.3px #000;">30</div>
<div class="t" style="left:1053.64px;top:1041px;font-size:20.5px;line-height:27px;color:#000;transform:scaleX(0.9759);-webkit-text-stroke:0.3px #000;">23,7</div>
<div class="t" style="left:1104.6px;top:1041px;font-size:20.5px;line-height:27px;color:#000;font-weight:bold;transform:scaleX(0.9361);">100 units —</div>
<div style="left:1218.1px;top:1040px;width:22px;height:22px;border-radius:50%;background:radial-gradient(ellipse 62% 40% at 50% 22%, rgba(255,175,175,0.95) 0%, rgba(255,255,255,0) 100%),linear-gradient(#EE3A3A 0%, #D81818 50%, #B51212 100%);box-shadow:inset 0 0 0 1px rgba(160,15,15,0.75)"></div>
<div class="t" style="left:1244.8px;top:1041px;font-size:20.5px;line-height:27px;color:#000;font-weight:bold;transform:scaleX(0.8878);">Below ROP</div>
<div class="t" style="left:0.5px;top:1071px;font-size:20.5px;line-height:27px;color:#000;transform:scaleX(0.9117);-webkit-text-stroke:0.3px #000;">SKU-020</div>
<div class="t" style="left:120.4px;top:1071px;font-size:20.5px;line-height:27px;color:#000;transform:scaleX(0.9883);-webkit-text-stroke:0.3px #000;">Boot — Moto Zip</div>
<div class="t" style="left:384.6px;top:1071px;font-size:20.5px;line-height:27px;color:#000;transform:scaleX(0.9756);-webkit-text-stroke:0.3px #000;">Boots</div>
<div class="t" style="left:627.37px;top:1071px;font-size:20.5px;line-height:27px;color:#000;transform:scaleX(0.9780);-webkit-text-stroke:0.3px #000;">185</div>
<div class="t" style="left:771.77px;top:1071px;font-size:20.5px;line-height:27px;color:#000;transform:scaleX(0.9780);-webkit-text-stroke:0.3px #000;">105</div>
<div class="t" style="left:926.1px;top:1071px;font-size:20.5px;line-height:27px;color:#000;transform:scaleX(0.9780);-webkit-text-stroke:0.3px #000;">28</div>
<div class="t" style="left:1053.64px;top:1071px;font-size:20.5px;line-height:27px;color:#000;transform:scaleX(0.9759);-webkit-text-stroke:0.3px #000;">33,6</div>
<div style="left:1104px;top:1070px;width:22px;height:22px;border-radius:4.5px;background:linear-gradient(#8DE890 0%,#3FD447 14%,#0DC20D 30%,#00B400 100%);box-shadow:inset 0 0 0 1px #1E9E1E;"><svg width="22" height="22" viewBox="0 0 22 22" style="position:absolute;left:0;top:0"><path d="M3.6 11.5 L5.7 10.3 L9.6 15.4 L17.2 4.6 L18.7 5.1 L10.3 19.6 L9.0 19.6 Z" fill="#fff" stroke="#fff" stroke-width="0.4" stroke-linejoin="round"/></svg></div>
<div class="t" style="left:1130.5px;top:1071px;font-size:20.5px;line-height:27px;color:#000;font-weight:bold;transform:scaleX(0.9619);">No order needed</div>
<div class="t" style="left:35.23px;top:471px;font-size:20.5px;line-height:27px;color:#fff;font-weight:bold;transform:scaleX(0.8484);">SKU</div>
<div class="t" style="left:210.73px;top:471px;font-size:20.5px;line-height:27px;color:#fff;font-weight:bold;transform:scaleX(0.9366);">Product</div>
<div class="t" style="left:409.71px;top:471px;font-size:20.5px;line-height:27px;color:#fff;font-weight:bold;transform:scaleX(0.9293);">Category</div>
<div class="t" style="left:538.48px;top:471px;font-size:20.5px;line-height:27px;color:#fff;font-weight:bold;transform:scaleX(0.9394);">Inv. Position</div>
<div class="t" style="left:719.49px;top:471px;font-size:20.5px;line-height:27px;color:#fff;font-weight:bold;transform:scaleX(0.8782);">ROP</div>
<div class="t" style="left:826.85px;top:471px;font-size:20.5px;line-height:27px;color:#fff;font-weight:bold;transform:scaleX(0.9123);">Safety Stock</div>
<div class="t" style="left:965.56px;top:471px;font-size:20.5px;line-height:27px;color:#fff;font-weight:bold;transform:scaleX(0.9062);">Days of Stock</div>
<div class="t" style="left:1191.66px;top:471px;font-size:20.5px;line-height:27px;color:#fff;font-weight:bold;transform:scaleX(0.9530);">Recommended Order</div>
<div class="t" style="left:0.5px;top:399px;font-size:20.5px;line-height:27px;color:#000;font-weight:bold;transform:scaleX(0.8570);">FULL REPLENISHMENT ACTION TABLE</div>
<div class="t" style="left:0.5px;top:1161px;font-size:20.5px;line-height:27px;color:#000;font-weight:bold;transform:scaleX(0.8927);">SUMMARY BY CATEGORY</div>
<div class="t" style="left:14.71px;top:1232px;font-size:20.5px;line-height:27px;color:#fff;font-weight:bold;transform:scaleX(0.9293);">Category</div>
<div class="t" style="left:224.21px;top:1232px;font-size:20.5px;line-height:27px;color:#fff;font-weight:bold;transform:scaleX(0.8336);">SKUs</div>
<div class="t" style="left:408.34px;top:1203px;font-size:20.5px;line-height:27px;color:#fff;font-weight:bold;transform:scaleX(0.9815);">Total Inv.</div>
<div class="t" style="left:413.81px;top:1232px;font-size:20.5px;line-height:27px;color:#fff;font-weight:bold;transform:scaleX(0.9197);">Position</div>
<div class="t" style="left:541.46px;top:1203px;font-size:20.5px;line-height:27px;color:#fff;font-weight:bold;transform:scaleX(0.9093);">Avg Days of</div>
<div class="t" style="left:570.07px;top:1232px;font-size:20.5px;line-height:27px;color:#fff;font-weight:bold;transform:scaleX(0.8927);">Stock</div>
<div class="t" style="left:675.86px;top:1203px;font-size:20.5px;line-height:27px;color:#fff;font-weight:bold;transform:scaleX(0.9584);">Total Reorder</div>
<div class="t" style="left:722.45px;top:1232px;font-size:20.5px;line-height:27px;color:#fff;font-weight:bold;transform:scaleX(0.9684);">Qty</div>
<div class="t" style="left:838.65px;top:1203px;font-size:20.5px;line-height:27px;color:#fff;font-weight:bold;transform:scaleX(0.9616);">Inventory</div>
<div class="t" style="left:856.96px;top:1232px;font-size:20.5px;line-height:27px;color:#fff;font-weight:bold;transform:scaleX(0.9725);">Value</div>
<div class="t" style="left:312px;top:168px;font-size:22.4px;line-height:29px;color:#fff;font-weight:bold;transform:scaleX(0.9236);-webkit-text-stroke:0.35px #fff;">Inventory Replenishment &amp; Safety Stock Calculator v3.0 — Dashboard</div>
<div class="t" style="left:1018.36px;top:168px;font-size:22.4px;line-height:29px;color:#fff;font-weight:bold;">|</div>
<div class="t" style="left:1040.7px;top:168px;font-size:22.4px;line-height:29px;color:#fff;font-weight:bold;transform:scaleX(0.8879);-webkit-text-stroke:0.35px #fff;">Decision Kits</div>
<div style="left:380px;top:198.5px;width:18px;height:18px;border-radius:50%;background:radial-gradient(ellipse 62% 40% at 50% 22%, rgba(170,210,255,0.95) 0%, rgba(255,255,255,0) 100%),linear-gradient(#2A7CF0 0%, #0A5ADA 50%, #0036AE 100%);box-shadow:inset 0 0 0 0.82px rgba(10,50,150,0.8)"></div>
<div class="t" style="left:402px;top:199.5px;font-size:16.8px;line-height:22px;color:#fff;transform:scaleX(0.9708);-webkit-text-stroke:0.3px #fff;">Blue = Input</div>
<div class="t" style="left:497.21px;top:199.5px;font-size:16.8px;line-height:22px;color:#fff;">·</div>
<div style="left:509.7px;top:198.5px;width:18px;height:18px;border-radius:50%;background:radial-gradient(ellipse 62% 40% at 50% 22%, rgba(255,248,170,0.95) 0%, rgba(255,255,255,0) 100%),linear-gradient(#FFE53A 0%, #FFDC00 50%, #FFCB00 100%);box-shadow:inset 0 0 0 0.82px rgba(215,165,0,0.8)"></div>
<div class="t" style="left:532px;top:199.5px;font-size:16.8px;line-height:22px;color:#fff;transform:scaleX(0.9284);-webkit-text-stroke:0.3px #fff;">Yellow = Calculated</div>
<div class="t" style="left:677.21px;top:199.5px;font-size:16.8px;line-height:22px;color:#fff;">·</div>
<div style="left:689.8px;top:198.5px;width:18px;height:18px;border-radius:50%;background:radial-gradient(ellipse 62% 40% at 50% 22%, rgba(170,245,160,0.95) 0%, rgba(255,255,255,0) 100%),linear-gradient(#2FD02F 0%, #10B010 50%, #078A07 100%);box-shadow:inset 0 0 0 0.82px rgba(5,100,5,0.8)"></div>
<div class="t" style="left:712px;top:199.5px;font-size:16.8px;line-height:22px;color:#fff;transform:scaleX(0.9720);-webkit-text-stroke:0.3px #fff;">Green = Output</div>
<div class="t" style="left:833.21px;top:199.5px;font-size:16.8px;line-height:22px;color:#fff;">·</div>
<div class="t" style="left:846px;top:199.5px;font-size:16.8px;line-height:22px;color:#fff;transform:scaleX(0.9742);-webkit-text-stroke:0.3px #fff;">Do not edit yellow or green cells</div>
<div class="t" style="left:1px;top:229.5px;font-size:16.8px;line-height:22px;color:#595959;font-style:italic;transform:scaleX(1.0195);">Update data in the InventoryPlanner tab. Dashboard refreshes automatically.</div>
<div class="t" style="left:0.5px;top:289.5px;font-size:16.8px;line-height:22px;color:#595959;font-weight:bold;transform:scaleX(0.8249);">TOTAL SKUS</div>
<div style="left:120.2px;top:287.5px;width:18px;height:18px;border-radius:50%;background:radial-gradient(ellipse 62% 40% at 50% 22%, rgba(255,175,175,0.95) 0%, rgba(255,255,255,0) 100%),linear-gradient(#EE3A3A 0%, #D81818 50%, #B51212 100%);box-shadow:inset 0 0 0 0.82px rgba(160,15,15,0.75)"></div>
<div class="t" style="left:142.5px;top:289.5px;font-size:16.8px;line-height:22px;color:#595959;font-weight:bold;transform:scaleX(0.8532);">BELOW ROP</div>
<div style="left:384px;top:287.8px;width:18px;height:18px;border-radius:50%;background:radial-gradient(ellipse 62% 40% at 50% 22%, rgba(255,248,170,0.95) 0%, rgba(255,255,255,0) 100%),linear-gradient(#FFE53A 0%, #FFDC00 50%, #FFCB00 100%);box-shadow:inset 0 0 0 0.82px rgba(215,165,0,0.8)"></div>
<div class="t" style="left:406.6px;top:289.5px;font-size:16.8px;line-height:22px;color:#595959;font-weight:bold;transform:scaleX(0.8391);">NEAR ROP</div>
<div class="t" style="left:528.5px;top:289.5px;font-size:16.8px;line-height:22px;color:#595959;font-weight:bold;transform:scaleX(0.8457);">TOTAL ORDER QTY</div>
<div class="t" style="left:672px;top:289.5px;font-size:16.8px;line-height:22px;color:#595959;font-weight:bold;transform:scaleX(0.8653);">TOTAL INVENTORY</div>
<div style="left:811px;top:284px;width:143px;height:28px;overflow:hidden">
<div class="t" style="left:5px;top:5.5px;font-size:16.8px;line-height:22px;color:#595959;font-weight:bold;transform:scaleX(0.8563);">AVG DAYS OF STOCK</div>
</div>
<div style="left:955px;top:284px;width:143px;height:28px;overflow:hidden">
<div class="t" style="left:5px;top:5.5px;font-size:16.8px;line-height:22px;color:#595959;font-weight:bold;transform:scaleX(0.8364);">AVG SAFETY STOCK</div>
</div>
<div class="t" style="left:1103.8px;top:289.5px;font-size:16.8px;line-height:22px;color:#595959;font-weight:bold;transform:scaleX(0.8476);">SKUs AT 90%+ SVC LEVEL</div>
<div class="t" style="left:42.4px;top:336px;font-size:24.3px;line-height:32px;color:#000;font-weight:bold;transform:scaleX(0.9840);">20</div>
<div class="t" style="left:240.3px;top:336px;font-size:24.3px;line-height:32px;color:#000;font-weight:bold;transform:scaleX(0.9046);">7</div>
<div class="t" style="left:443.75px;top:336px;font-size:24.3px;line-height:32px;color:#000;font-weight:bold;transform:scaleX(0.9862);">0</div>
<div class="t" style="left:565.1px;top:336px;font-size:24.3px;line-height:32px;color:#000;font-weight:bold;transform:scaleX(0.9801);">1.780</div>
<div class="t" style="left:688.4px;top:336px;font-size:24.3px;line-height:32px;color:#000;font-weight:bold;transform:scaleX(1.0027);">$131.191</div>
<div class="t" style="left:860.6px;top:336px;font-size:24.3px;line-height:32px;color:#000;font-weight:bold;transform:scaleX(0.9805);">38,0</div>
<div class="t" style="left:1003.7px;top:336px;font-size:24.3px;line-height:32px;color:#000;font-weight:bold;transform:scaleX(0.9889);">45,1</div>
<div class="t" style="left:1277.8px;top:336px;font-size:24.3px;line-height:32px;color:#000;font-weight:bold;transform:scaleX(0.9951);">20</div>
<div style="left:0px;top:152px;width:1486px;height:4px;background:#217346;"></div>
<div style="left:0px;top:156px;width:1482px;height:2px;background:#fff;"></div>
<div style="left:1482px;top:152px;width:4px;height:48px;background:#217346;"></div>
<div style="left:1480px;top:156px;width:2px;height:40px;background:#fff;"></div>
<div style="left:0px;top:194px;width:1482px;height:2px;background:#fff;"></div>
<div style="left:0px;top:196px;width:1486px;height:4px;background:#217346;"></div>
<div style="left:1476px;top:190px;width:12px;height:12px;background:#fff;"></div>
<div style="left:1478px;top:192px;width:10px;height:10px;background:#217346;"></div>
<div style="left:0px;top:112px;width:1483px;height:42px;background:#F2F2F2;"></div>
<div style="left:1483px;top:112px;width:215px;height:42px;background:#F9F9F9;"></div>
<div style="left:114px;top:112px;width:2px;height:40px;background:#DEDEDE;"></div>
<div style="left:378px;top:112px;width:2px;height:40px;background:#DEDEDE;"></div>
<div style="left:522px;top:112px;width:2px;height:40px;background:#DEDEDE;"></div>
<div style="left:666px;top:112px;width:2px;height:40px;background:#DEDEDE;"></div>
<div style="left:810px;top:112px;width:2px;height:40px;background:#DEDEDE;"></div>
<div style="left:954px;top:112px;width:2px;height:40px;background:#DEDEDE;"></div>
<div style="left:1098px;top:112px;width:2px;height:40px;background:#DEDEDE;"></div>
<div style="left:1482px;top:112px;width:2px;height:40px;background:#DEDEDE;"></div>
<div style="left:1586px;top:112px;width:2px;height:40px;background:#DEDEDE;"></div>
<div style="left:1690px;top:112px;width:2px;height:40px;background:#DEDEDE;"></div>
<div style="left:1486px;top:154px;width:212px;height:2px;background:#C2C2C2;"></div>
<div class="t" style="left:49.5px;top:119px;font-size:20.5px;line-height:27px;color:#217346;transform:scaleX(0.9500);-webkit-text-stroke:0.5px #217346;">A</div>
<div class="t" style="left:240.5px;top:119px;font-size:20.5px;line-height:27px;color:#217346;transform:scaleX(0.9500);-webkit-text-stroke:0.5px #217346;">B</div>
<div class="t" style="left:443.96px;top:119px;font-size:20.5px;line-height:27px;color:#217346;transform:scaleX(0.9500);-webkit-text-stroke:0.5px #217346;">C</div>
<div class="t" style="left:587.96px;top:119px;font-size:20.5px;line-height:27px;color:#217346;transform:scaleX(0.9500);-webkit-text-stroke:0.5px #217346;">D</div>
<div class="t" style="left:732.5px;top:119px;font-size:20.5px;line-height:27px;color:#217346;transform:scaleX(0.9500);-webkit-text-stroke:0.5px #217346;">E</div>
<div class="t" style="left:877.06px;top:119px;font-size:20.5px;line-height:27px;color:#217346;transform:scaleX(0.9500);-webkit-text-stroke:0.5px #217346;">F</div>
<div class="t" style="left:1019.43px;top:119px;font-size:20.5px;line-height:27px;color:#217346;transform:scaleX(0.9500);-webkit-text-stroke:0.5px #217346;">G</div>
<div class="t" style="left:1283.96px;top:119px;font-size:20.5px;line-height:27px;color:#217346;transform:scaleX(0.9500);-webkit-text-stroke:0.5px #217346;">H</div>
<div class="t" style="left:1532.3px;top:119px;font-size:20.5px;line-height:27px;color:#555;transform:scaleX(0.9500);-webkit-text-stroke:0.5px #555;">I</div>
<div class="t" style="left:1634.13px;top:119px;font-size:20.5px;line-height:27px;color:#555;transform:scaleX(0.9500);-webkit-text-stroke:0.5px #555;">J</div>
<div style="left:0px;top:152px;width:1486px;height:4px;background:#217346;"></div>
<div style="left:0px;top:0px;width:1698px;height:52px;background:linear-gradient(#FCF5DF,#F9F1DB);"></div>
<div style="left:0px;top:51.8px;width:1698px;height:2.1px;background:#C8C2B0;"></div>
<div class="t" style="left:15.2px;top:7px;font-size:25px;line-height:32px;color:#262626;transform:scaleX(1.0212);-webkit-text-stroke:0.75px #262626;">Open recovered workbooks?</div>
<div class="t" style="left:362.8px;top:7.5px;font-size:24.5px;line-height:32px;color:#262626;transform:scaleX(1.0374);">Your recent changes were saved. Do you want to continue working where you left off?</div>
<div style="left:0px;top:54px;width:1698px;height:52px;background:#fff;"></div>
<div style="left:0px;top:54px;width:120px;height:2px;background:#CBCBCB;"></div>
<div style="left:0px;top:104px;width:120px;height:2px;background:#CBCBCB;"></div>
<div style="left:118px;top:54px;width:2px;height:52px;background:#C8C8C8;"></div>
<svg style="position:absolute;left:0;top:0" width="400" height="112"><path d="M103 73 L117 73 L110 62 Z" fill="#6A6A6A"/><path d="M103 84.5 L117 84.5 L110 95.6 Z" fill="#6A6A6A"/><path d="M152.2 74.2 L169.7 91.7 M169.7 74.2 L152.2 91.7" stroke="#CFCFCF" stroke-width="4.2" stroke-linecap="round"/><path d="M208.6 82.6 L216.3 90.8 L231.4 74.6" fill="none" stroke="#CFCFCF" stroke-width="4.2" stroke-linecap="round" stroke-linejoin="round"/><path d="M293.3 79.6 L299 85.6 L304.7 79.6" fill="none" stroke="#CDCDCD" stroke-width="2.6" stroke-linecap="round" stroke-linejoin="round"/></svg>
<svg style="position:absolute;left:0;top:0" width="320" height="110" fill="none" stroke="#454545" stroke-linecap="round"><path d="M271.3 70.2 C270.6 67.4, 266.9 66.9, 265.2 70.2 C263.9 72.8, 263.1 80, 261.8 87 C260.9 92.2, 259.6 95.6, 256.6 96.4 C255 96.8, 254 95.8, 254.5 94.6" stroke-width="2.4"/><circle cx="271.2" cy="70.6" r="1.9" fill="#454545" stroke="none"/><circle cx="254.6" cy="94.5" r="1.9" fill="#454545" stroke="none"/><path d="M258 78 L268.8 78" stroke-width="1.7" stroke-linecap="butt"/><path d="M269.2 81.8 C270.4 80.2, 272.6 80.3, 273.6 83 L277 89.2 C278 91.2, 280 90.8, 281 89.2" stroke-width="2.3"/><path d="M280.6 81.2 C279.6 80.3, 278.2 80.9, 276.8 82.4 L271.2 88.4 C270.2 89.8, 268.8 90, 268.2 88.8" stroke-width="1.7"/><circle cx="280.5" cy="81.5" r="1.6" fill="#454545" stroke="none"/><circle cx="268.4" cy="88.7" r="1.6" fill="#454545" stroke="none"/></svg>
<div style="left:310.5px;top:61px;width:1500px;height:39.5px;border:1px solid #D8D8D8;border-left:1.6px solid #BDBDBD;border-radius:5px;background:#fdfdfd"></div>
<div class="t" style="left:327px;top:63.5px;font-size:27px;line-height:35px;color:#1A1A1A;transform:scaleX(0.9159);">Inventory Replenishment &amp; Safety Stock Calculator v3.0 — Dashboard</div>
<div class="t" style="left:1116.29px;top:63.5px;font-size:27px;line-height:35px;color:#1A1A1A;">|</div>
<div class="t" style="left:1141.7px;top:63.5px;font-size:27px;line-height:35px;color:#1A1A1A;transform:scaleX(0.9067);">Decision Kits</div>
<div style="left:0px;top:106px;width:1698px;height:6px;background:linear-gradient(#D0D0D0,#F8F8F8,#D0D0D0);"></div>
<div style="left:0px;top:106px;width:1698px;height:1.5px;background:#A0A0A0;"></div>
<div style="left:0px;top:110.5px;width:1698px;height:1.5px;background:#A0A0A0;"></div>
<div style="left:0px;top:1244px;width:1698px;height:53px;background:linear-gradient(#F3F3F3,#EBEBEB);"></div>
<div style="left:0px;top:1244px;width:1698px;height:2px;background:#D8D5D1;"></div>
<div style="left:0px;top:1296px;width:1698px;height:1.6px;background:#B8B8B8;"></div>
<svg style="position:absolute;left:0;top:1240" width="820" height="60"><path d="M27 21.5 L39.5 31 L27 40.5 Z" fill="#ABABAB" stroke="#ABABAB" stroke-width="1.5" stroke-linejoin="round"/><rect x="70" y="6" width="1.5" height="40" fill="#CFCFCF"/><rect x="724.5" y="6" width="1.5" height="40" fill="#CFCFCF"/><rect x="800.5" y="6" width="1.5" height="40" fill="#CFCFCF"/><rect x="762.5" y="19.5" width="3.6" height="20" fill="#555"/><rect x="754" y="27.7" width="20.5" height="3.6" fill="#555"/></svg>
<div style="left:332.5px;top:1244px;width:194px;height:45px;background:#fff;border:1.5px solid #C4C4C4;border-top:none;border-radius:0 0 6px 6px;box-shadow:0 1px 1px rgba(0,0,0,0.12)"></div>
<div class="t" style="left:108.8px;top:1254px;font-size:24px;line-height:31px;color:#555;transform:scaleX(1.0273);-webkit-text-stroke:0.3px #555;">InventoryPlanner</div>
<div class="t" style="left:367.7px;top:1254px;font-size:24px;line-height:31px;color:#1E8449;font-weight:bold;transform:scaleX(0.9917);">Dashboard</div>
<div class="t" style="left:561.8px;top:1254px;font-size:24px;line-height:31px;color:#555;transform:scaleX(1.0337);-webkit-text-stroke:0.3px #555;">How to Use</div>
<div style="left:0px;top:1298px;width:1698px;height:20px;background:#F4F4F4;"></div>
<div class="t" style="left:0.5px;top:1309px;font-size:23px;line-height:30px;color:#3A3A3A;transform:scaleX(0.9328);">Ready</div>
<div class="t" style="left:154.5px;top:1309px;font-size:23px;line-height:30px;color:#3A3A3A;transform:scaleX(1.0992);">Accessibility: Investigate</div>
<svg style="position:absolute;left:108px;top:1300px" width="40" height="18"><circle cx="18" cy="12.4" r="4.2" fill="none" stroke="#555" stroke-width="2"/><path d="M5 22 C3 15, 10 14, 18 18 C26 14, 33 15, 31 22" fill="none" stroke="#555" stroke-width="2"/></svg>
</body></html>
